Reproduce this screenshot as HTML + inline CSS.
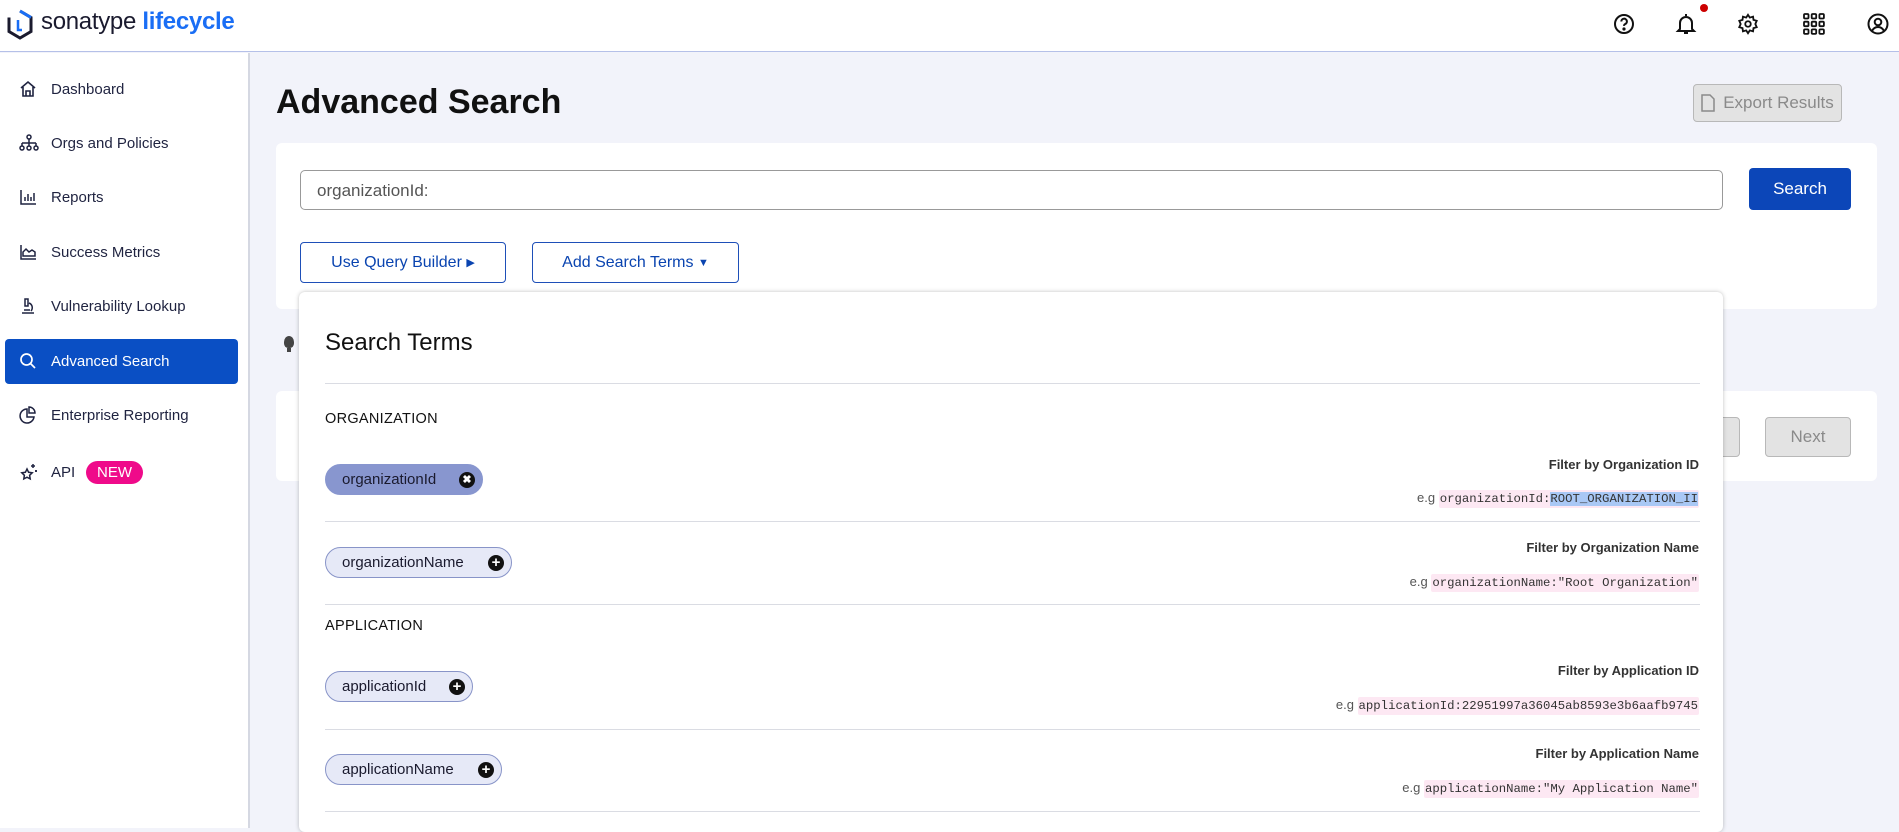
<!DOCTYPE html>
<html><head><meta charset="utf-8"><style>
*{box-sizing:border-box;margin:0;padding:0}
body{width:1899px;height:828px;overflow:hidden;font-family:"Liberation Sans",sans-serif;background:#f2f3fa;position:relative;color:#1a1a2e}
.a{position:absolute}
.hdr{left:0;top:0;width:1899px;height:52px;background:#fff;border-bottom:1px solid #b5c0e8}
.side{left:0;top:53px;width:250px;height:775px;background:#fff;border-right:2px solid #d5d8e2}
.nav{left:0;width:250px;height:30px;font-size:15px;color:#1f2340;display:flex;align-items:center}
.nav svg{position:absolute;left:19px}
.nav span{position:absolute;left:51px}
.btn{border-radius:4px;display:flex;align-items:center;justify-content:center;font-size:16px}
.chip{height:31px;border-radius:16px;background:#e6e9f7;border:1px solid #8894c8;font-size:15px;display:flex;align-items:center;padding-left:16px;color:#1a1a2e}
.chip i{position:absolute;right:7px;top:7px;width:16px;height:16px;border-radius:50%;background:#111;color:#fff;font-style:normal;font-size:15px;font-weight:bold;line-height:16px;text-align:center}
.flt{right:200px;font-size:13px;font-weight:bold;color:#333;text-align:right}
.ex{right:200px;font-size:13px;color:#555;text-align:right}
.ex code{font-family:"Liberation Mono",monospace;font-size:12.3px;background:#fde8f3;color:#333;padding:2px 1px;border-radius:2px}
.dv{left:325px;width:1375px;height:1px;background:#dadce3}
.sec{left:325px;font-size:14.5px;color:#111;letter-spacing:.3px}
</style></head><body>
<div class="a hdr"></div>
<svg class="a" style="left:6px;top:9px" width="28" height="31" viewBox="0 0 28 31"><path d="M14 2 L25 8.5 V22.5 L14 29 L3 22.5 V8.5" fill="none" stroke="#1a1a2e" stroke-width="3"/><path d="M14 2 L25 8.5" stroke="#1a6ef5" stroke-width="3"/><path d="M12 11 V21 H16" fill="none" stroke="#1a6ef5" stroke-width="2.5"/></svg>
<div class="a" style="left:41px;top:8px;font-size:24px;color:#1a1a2e;letter-spacing:-.3px">sonatype <b style="color:#1a6ef5;font-weight:600">lifecycle</b></div>
<!-- header icons -->
<svg class="a" style="left:1613px;top:13px" width="22" height="22" viewBox="0 0 22 22" fill="none" stroke="#111" stroke-width="2"><circle cx="11" cy="11" r="9"/><path d="M8.3 8.5a2.8 2.8 0 1 1 3.8 2.6c-.8.4-1.1.9-1.1 1.8"/><circle cx="11" cy="16" r=".6" fill="#111"/></svg>
<svg class="a" style="left:1675px;top:12px" width="22" height="24" viewBox="0 0 22 24" fill="none" stroke="#111" stroke-width="2"><path d="M11 2v2M5 17V11a6 6 0 0 1 12 0v6l2 2H3z"/><path d="M9 21h4"/></svg>
<div class="a" style="left:1700px;top:4px;width:8px;height:8px;border-radius:50%;background:#c00"></div>
<svg class="a" style="left:1737px;top:13px" width="22" height="22" viewBox="0 0 24 24" fill="none" stroke="#111" stroke-width="2"><circle cx="12" cy="12" r="3"/><path d="M12 2l2 3 3.5-1 .5 3.5 3.5 1-1.5 3.5 1.5 3.5-3.5 1-.5 3.5-3.5-1-2 3-2-3-3.5 1-.5-3.5-3.5-1L4 12 2.5 8.5l3.5-1L6.5 4 10 5z"/></svg>
<svg class="a" style="left:1803px;top:13px" width="22" height="22" viewBox="0 0 22 22" fill="none" stroke="#111" stroke-width="1.8"><g id="r"><rect x="1" y="1" width="4.5" height="4.5" rx="1"/><rect x="8.7" y="1" width="4.5" height="4.5" rx="1"/><rect x="16.4" y="1" width="4.5" height="4.5" rx="1"/></g><use href="#r" y="7.7"/><use href="#r" y="15.4"/></svg>
<svg class="a" style="left:1867px;top:13px" width="22" height="22" viewBox="0 0 22 22" fill="none" stroke="#111" stroke-width="2"><circle cx="11" cy="11" r="9.5"/><circle cx="11" cy="9" r="3.3"/><path d="M5 18c1.5-3 3.5-4 6-4s4.5 1 6 4"/></svg>

<div class="a side"></div>
<div class="a nav" style="top:74px"><svg width="18" height="18" viewBox="0 0 18 18" fill="none" stroke="#1f2340" stroke-width="1.6" style="left:19px"><path d="M2 8L9 2l7 6M4 7v9h10V7M7 16v-5h4v5"/></svg><span>Dashboard</span></div>
<div class="a nav" style="top:128px"><svg width="20" height="18" viewBox="0 0 20 18" fill="none" stroke="#1f2340" stroke-width="1.5"><circle cx="10" cy="3" r="2"/><path d="M10 5v4M3 9h14M3 9v3M10 9v3M17 9v3"/><circle cx="3" cy="14" r="2"/><circle cx="10" cy="14" r="2"/><circle cx="17" cy="14" r="2"/></svg><span>Orgs and Policies</span></div>
<div class="a nav" style="top:182px"><svg width="18" height="18" viewBox="0 0 18 18" fill="none" stroke="#1f2340" stroke-width="1.5"><path d="M2 2v14h15M6 13V9M9 13V6M12 13V9M15 13V5"/></svg><span>Reports</span></div>
<div class="a nav" style="top:237px"><svg width="18" height="18" viewBox="0 0 18 18" fill="none" stroke="#1f2340" stroke-width="1.5"><path d="M2 2v14h15M4 13V9l3-3 3 3 3-2 3 2v4z"/></svg><span>Success Metrics</span></div>
<div class="a nav" style="top:291px"><svg width="18" height="18" viewBox="0 0 18 18" fill="none" stroke="#1f2340" stroke-width="1.5"><path d="M6 2h3v7H6zM3 16h12M5 13h6M10 6a5 5 0 0 1 2 8"/></svg><span>Vulnerability Lookup</span></div>
<div class="a" style="left:5px;top:339px;width:233px;height:45px;background:#0a4fc4;border-radius:4px"></div>
<div class="a nav" style="top:346px;color:#fff"><svg width="18" height="18" viewBox="0 0 18 18" fill="none" stroke="#fff" stroke-width="1.7"><circle cx="7.5" cy="7.5" r="5.5"/><path d="M11.5 11.5L16 16"/></svg><span>Advanced Search</span></div>
<div class="a nav" style="top:400px"><svg width="18" height="18" viewBox="0 0 18 18" fill="none" stroke="#1f2340" stroke-width="1.5"><path d="M8 3a7 7 0 1 0 7 8H8z"/><path d="M10 1v6h6a6 6 0 0 0-6-6z"/></svg><span>Enterprise Reporting</span></div>
<div class="a nav" style="top:457px"><svg width="20" height="18" viewBox="0 0 20 18" fill="none" stroke="#1f2340" stroke-width="1.5"><path d="M8 6l1.6 3.3 3.6.5-2.6 2.5.6 3.6L8 14.2l-3.2 1.7.6-3.6L2.8 9.8l3.6-.5z"/><path d="M14 1v4M12 3h4M17 7v2M16 8h2"/></svg><span>API</span></div>
<div class="a" style="left:86px;top:461px;width:57px;height:23px;border-radius:12px;background:#ef0a8a;color:#fff;font-size:15px;text-align:center;line-height:23px">NEW</div>

<!-- main -->
<div class="a" style="left:276px;top:83px;font-size:34px;font-weight:bold;color:#111">Advanced Search</div>
<div class="a btn" style="left:1693px;top:84px;width:149px;height:38px;background:#e3e3e3;border:1px solid #b8b8b8;color:#8a8a8a;font-size:17px"><svg width="14" height="18" viewBox="0 0 14 18" fill="none" stroke="#8a8a8a" stroke-width="1.5" style="margin-right:8px"><path d="M1 1h8l4 4v12H1z"/></svg>Export Results</div>
<div class="a" style="left:276px;top:143px;width:1601px;height:166px;background:#fff;border-radius:6px"></div>
<div class="a" style="left:300px;top:170px;width:1423px;height:40px;border:1.5px solid #999;border-radius:5px;background:#fff;font-size:17px;color:#555;padding:10px 16px">organizationId:</div>
<div class="a btn" style="left:1749px;top:168px;width:102px;height:42px;background:#0c46b8;color:#fff;font-size:17px">Search</div>
<div class="a btn" style="left:300px;top:242px;width:206px;height:41px;border:1.5px solid #1e4fb8;color:#0a44b0;background:#fff">Use Query Builder&nbsp;<span style="font-size:11px">▶</span></div>
<div class="a btn" style="left:532px;top:242px;width:207px;height:41px;border:1.5px solid #1e4fb8;color:#0a44b0;background:#fff">Add Search Terms&nbsp;<span style="font-size:11px">▼</span></div>
<div class="a" style="left:284px;top:336px;width:10px;height:12px;border-radius:50% 50% 40% 40%;background:#444"></div>
<div class="a" style="left:287px;top:348px;width:4px;height:4px;background:#444"></div>
<div class="a" style="left:276px;top:391px;width:1601px;height:90px;background:#fff;border-radius:6px"></div>
<div class="a btn" style="left:1680px;top:417px;width:60px;height:40px;background:#e3e3e3;border:1px solid #b8b8b8"></div>
<div class="a btn" style="left:1765px;top:417px;width:86px;height:40px;background:#e3e3e3;border:1px solid #b8b8b8;color:#8a8a8a;font-size:17px">Next</div>

<!-- dropdown -->
<div class="a" style="left:299px;top:292px;width:1424px;height:540px;background:#fff;border-radius:6px;box-shadow:0 0 4px rgba(0,0,0,.25)"></div>
<div class="a" style="left:325px;top:329px;font-size:24px;color:#111">Search Terms</div>
<div class="a dv" style="top:383px"></div>
<div class="a sec" style="top:411px">ORGANIZATION</div>
<div class="a chip" style="left:325px;top:464px;width:158px;background:#8896cf;border-color:#8896cf">organizationId<i style="font-size:11px">✖</i></div>
<div class="a flt" style="top:457px">Filter by Organization ID</div>
<div class="a ex" style="top:490px">e.g <code>organizationId:<span style="background:#a9c8f5">ROOT_ORGANIZATION_II</span></code></div>
<div class="a dv" style="top:521px"></div>
<div class="a chip" style="left:325px;top:547px;width:187px">organizationName<i>+</i></div>
<div class="a flt" style="top:540px">Filter by Organization Name</div>
<div class="a ex" style="top:574px">e.g <code>organizationName:"Root Organization"</code></div>
<div class="a dv" style="top:604px"></div>
<div class="a sec" style="top:618px">APPLICATION</div>
<div class="a chip" style="left:325px;top:671px;width:148px">applicationId<i>+</i></div>
<div class="a flt" style="top:663px">Filter by Application ID</div>
<div class="a ex" style="top:697px">e.g <code>applicationId:22951997a36045ab8593e3b6aafb9745</code></div>
<div class="a dv" style="top:729px"></div>
<div class="a chip" style="left:325px;top:754px;width:177px">applicationName<i>+</i></div>
<div class="a flt" style="top:746px">Filter by Application Name</div>
<div class="a ex" style="top:780px">e.g <code>applicationName:"My Application Name"</code></div>
<div class="a dv" style="top:811px"></div>
</body></html>
